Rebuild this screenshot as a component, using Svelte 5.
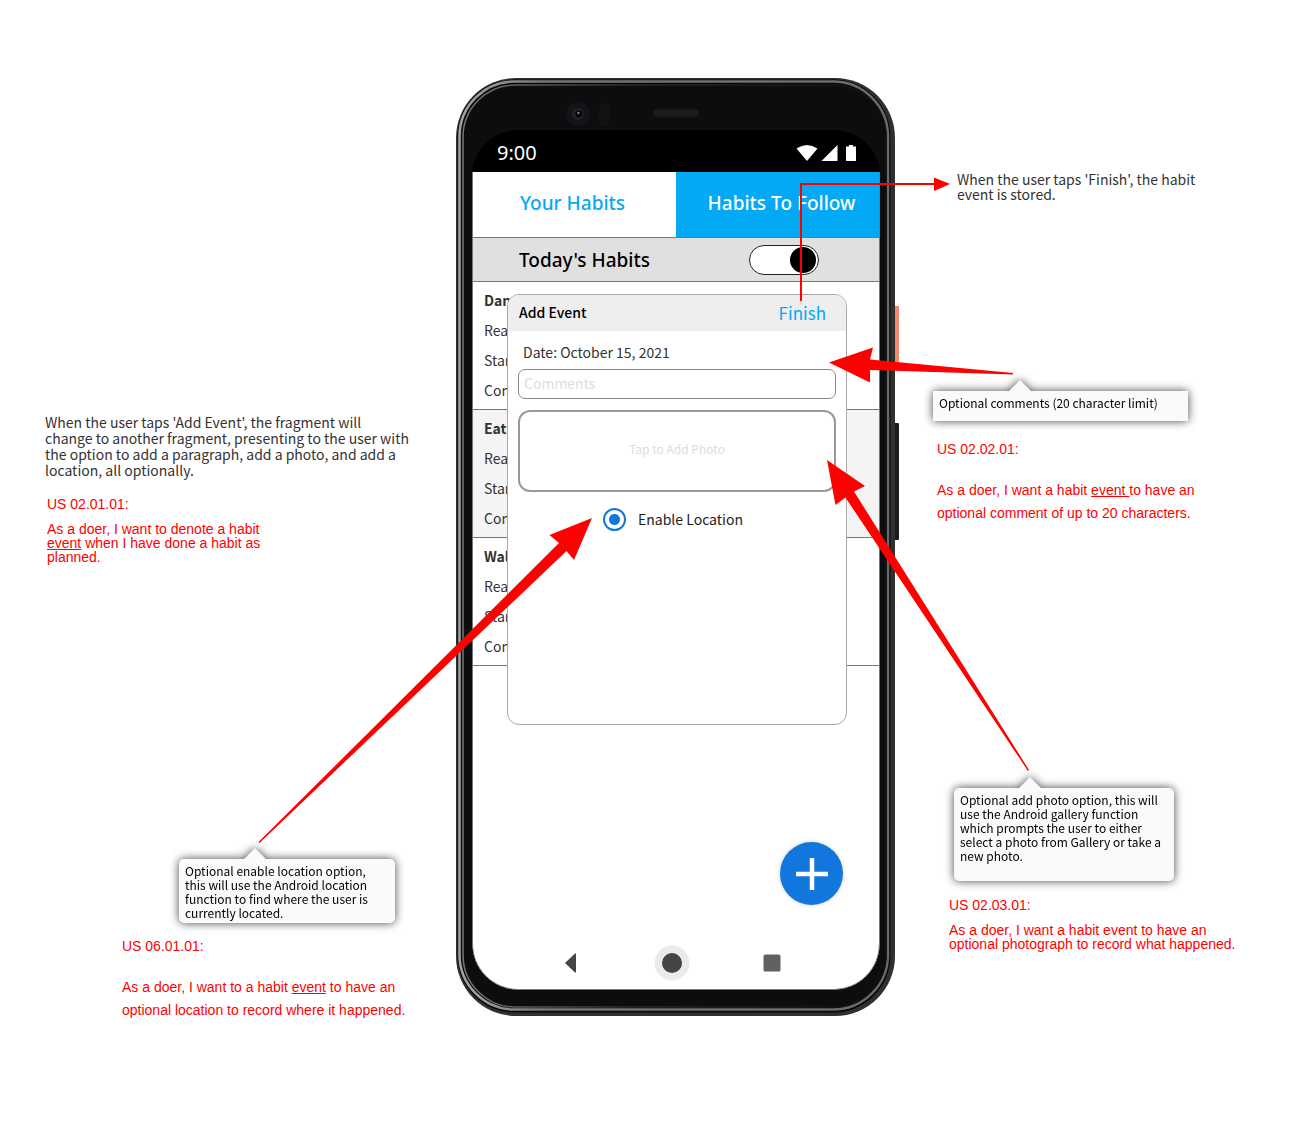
<script>
  const habits = [
    { name: 'Dance', shaded: false },
    { name: 'Eat', shaded: true },
    { name: 'Walk', shaded: false }
  ];
  let comments = $state('');
  let today = $state(true);
  let location = $state('on');
</script>

<main class="board">
  <section class="phone" aria-label="Phone">
    <svg class="shell" viewBox="0 0 444 940" aria-hidden="true">
      <defs>
        <linearGradient id="rim" x1="0" x2="1" y1="0" y2="0">
          <stop offset="0" stop-color="#a4a6a5" />
          <stop offset="0.2" stop-color="#777" />
          <stop offset="1" stop-color="#6a6a6a" />
        </linearGradient>
        <linearGradient id="inner" x1="0" x2="1" y1="0" y2="0">
          <stop offset="0" stop-color="#777" />
          <stop offset="0.4" stop-color="#2a2a2a" />
          <stop offset="1" stop-color="#111" />
        </linearGradient>
      </defs>
      <rect x="438" y="228" width="5" height="58" fill="#f5876e" />
      <rect x="438" y="345" width="5" height="117" rx="1" fill="#1c1c1c" />
      <rect x="0" y="0" width="439" height="938" rx="60" fill="#303031" />
      <rect x="1.500" y="1.500" width="433" height="933" rx="57" fill="#080808" />
      <rect x="3.500" y="3.500" width="428.500" height="928" rx="55" fill="#080808" stroke="url(#rim)" stroke-width="2.500" />
      <rect x="7" y="7" width="423" height="922" rx="52" fill="#0c0d0e" stroke="url(#inner)" stroke-width="1.500" />
      <circle cx="122" cy="36" r="12" fill="#131415" />
      <circle cx="122" cy="36" r="6" fill="#212327" />
      <circle cx="123" cy="36" r="3.500" fill="#08090d" />
      <circle cx="122.500" cy="35" r="1" fill="#a5abc0" />
      <rect x="143" y="25" width="11" height="23" rx="5" fill="#111213" />
      <rect x="197" y="31" width="46" height="8" rx="4" fill="#1b1b1b" stroke="#151515" />
    </svg>

    <div class="screen">
      <header class="status">
        <span>9:00</span>
        <svg width="62" height="18" viewBox="0 0 62 18" fill="#fff" aria-hidden="true">
          <path d="M0.500 4.500 Q11 -2.500 21.500 4.500 L11 17Z" />
          <path d="M25.500 17 H41.500 V1Z" />
          <path d="M50 2.500 H53 V1 H57 V2.500 H60 V17 H50Z" />
        </svg>
      </header>
      <div class="app">
        <nav class="tabs">
          <button class="tab">Your Habits</button>
          <button class="tab active">Habits To Follow</button>
        </nav>
        <div class="today">
          <label for="today">Today's Habits</label>
          <input id="today" class="switch" type="checkbox" role="switch" bind:checked={today} />
        </div>
        <ul class="habits">
          {#each habits as habit}
            <li class:shaded={habit.shaded}>
              <strong>{habit.name}</strong>
              <span>Reason</span>
              <span>Start</span>
              <span>Complete</span>
            </li>
          {/each}
        </ul>
        <button class="add" aria-label="Add habit">
          <svg width="34" height="34" viewBox="0 0 34 34" aria-hidden="true">
            <path d="M17 1V33M1 17H33" stroke="#fff" stroke-width="4.500" />
          </svg>
        </button>
        <nav class="system">
          <button aria-label="Back"><svg width="36" height="36" viewBox="0 0 36 36"><path d="M11 18 L21 8.500 H22 V27.500 H21Z" fill="#444" /></svg></button>
          <button aria-label="Home"><svg width="36" height="36" viewBox="0 0 36 36"><circle cx="18" cy="18" r="17.500" fill="#ebebeb" /><circle cx="18" cy="18" r="10" fill="#444" /></svg></button>
          <button aria-label="Recent"><svg width="36" height="36" viewBox="0 0 36 36"><rect x="9.500" y="9.500" width="17" height="17" rx="1.500" fill="#616161" /></svg></button>
        </nav>
      </div>
    </div>

    <form class="dialog" onsubmit={(e) => e.preventDefault()}>
      <header>
        <h2>Add Event</h2>
        <button class="finish">Finish</button>
      </header>
      <div class="fields">
        <p>Date: October 15, 2021</p>
        <input class="comments" aria-label="Comments" placeholder="Comments" maxlength="20" bind:value={comments} />
        <button class="photo" type="button">Tap to Add Photo</button>
        <label class="location">
          <input type="radio" name="location" value="on" bind:group={location} />
          Enable Location
        </label>
      </div>
    </form>
  </section>

  <svg class="arrows" width="1301" height="1136" viewBox="0 0 1301 1136" fill="#f00" aria-hidden="true">
    <path d="M801 301 V184 H936" fill="none" stroke="#f00" stroke-width="2" />
    <path d="M934 177.500 L950 184 L934 191Z" />
    <path d="M829 362.500 L873 347.500 L870 359.500 L1013 373 V374.500 L870 370 V382.500Z" />
    <path d="M827 460 L865 486 L854 491.500 L1029 770 L1028 771 L845.500 497.500 L835.500 505Z" />
    <path d="M592 518 L549.500 535 L559 543 L258.500 842 L259.500 843 L566.500 551 L574 560Z" />
  </svg>

  <p class="note finish-note">When the user taps 'Finish', the habit event is stored.</p>

  <section class="event-note">
    <p class="note">When the user taps 'Add Event', the fragment will change to another fragment, presenting to the user with the option to add a paragraph, add a photo, and add a location, all optionally.</p>
    <div class="story tight">
      <p>US 02.01.01:</p>
      <p>As a doer, I want to denote a habit <u>event</u> when I have done a habit as planned.</p>
    </div>
  </section>

  <section class="comment-note">
    <p class="callout square">Optional comments (20 character limit)</p>
    <div class="story">
      <p>US 02.02.01:</p>
      <p>As a doer, I want a habit <u>event{' '}</u>to have an optional comment of up to 20 characters.</p>
    </div>
  </section>

  <section class="photo-note">
    <p class="callout">Optional add photo option, this will use the Android gallery function which prompts the user to either select a photo from Gallery or take a new photo.</p>
    <div class="story tight">
      <p>US 02.03.01:</p>
      <p>As a doer, I want a habit event to have an optional photograph to record what happened.</p>
    </div>
  </section>

  <section class="location-note">
    <p class="callout">Optional enable location option, this will use the Android location function to find where the user is currently located.</p>
    <div class="story">
      <p>US 06.01.01:</p>
      <p>As a doer, I want to a habit <u>event</u> to have an optional location to record where it happened.</p>
    </div>
  </section>
</main>

<style>
  :global(body) { margin: 0; background: #fff; }
  .board {
    position: relative;
    min-height: 100vh;
    color: #333;
    font-family: "Noto Sans CJK SC", "Noto Sans", sans-serif;
    font-size: 14px;
  }
  .board :global(*) { box-sizing: border-box; }
  p, h2, ul { margin: 0; padding: 0; font-weight: 400; }
  button { border: 0; padding: 0; background: none; font: inherit; color: inherit; }

  .phone { position: absolute; left: 456px; top: 78px; width: 444px; padding: 52px 20px 28px 16px; }
  .shell { position: absolute; left: 0; top: 0; width: 444px; height: 940px; }
  .screen {
    position: relative;
    display: flex;
    flex-direction: column;
    min-height: 860px;
    border-radius: 46px;
    overflow: hidden;
    background: #000;
  }
  .app {
    flex: 1;
    display: flex;
    flex-direction: column;
    border: 1px solid #777;
    border-top: 0;
    border-radius: 0 0 46px 46px;
    background: #fff;
    overflow: hidden;
  }
  .status {
    display: flex;
    align-items: center;
    justify-content: space-between;
    height: 42px;
    padding: 4px 22px 0 25px;
    color: #fff;
    font-family: "Noto Sans", sans-serif;
    font-size: 20px;
    line-height: 38px;
  }
  .tabs { display: grid; grid-template-columns: 1fr 1fr; height: 66px; border-bottom: 1px solid #777; }
  .tab {
    padding: 0 4px 3px 0;
    color: #03a9f4;
    font-family: "Noto Sans", sans-serif;
    font-size: 19px;
    font-weight: 500;
  }
  .tab.active { background: #03a9f4; color: #fff; padding: 0 0 3px 8px; }
  .today {
    display: flex;
    align-items: center;
    justify-content: space-between;
    height: 44px;
    padding: 0 60px 0 46px;
    background: #e0e0e0;
    border-bottom: 1px solid #777;
    color: #000;
    font-family: "Noto Sans", sans-serif;
    font-size: 19px;
    font-weight: 500;
  }
  .switch {
    appearance: none;
    display: flex;
    justify-content: flex-start;
    align-items: center;
    width: 70px;
    height: 30px;
    margin: 0;
    padding: 2px;
    border: 1px solid #222;
    border-radius: 15px;
    background: #fff;
  }
  .switch::before { content: ""; width: 26px; height: 26px; border-radius: 50%; background: #000; }
  .switch:checked { justify-content: flex-end; }
  .habits { list-style: none; }
  .habits li {
    display: flex;
    flex-direction: column;
    height: 128px;
    padding: 3px 11px;
    border-bottom: 1px solid #777;
    line-height: 30px;
  }
  .habits .shaded { background: #f4f4f4; }
  .add {
    display: grid;
    place-items: center;
    width: 63px;
    height: 63px;
    margin: auto 36px 40px auto;
    border-radius: 50%;
    background: #1277dc;
    box-shadow: 0 0 4px #0003;
  }
  .system { display: flex; justify-content: center; gap: 64px; height: 44px; margin-right: 8px; }
  .system button { height: 36px; }

  .dialog {
    position: absolute;
    left: 51px;
    top: 216px;
    width: 340px;
    min-height: 431px;
    border: 1px solid #aaa;
    border-radius: 12px;
    overflow: hidden;
    background: #fff;
  }
  .dialog header {
    display: flex;
    align-items: center;
    justify-content: space-between;
    height: 36px;
    padding: 0 20px 2px 11px;
    background: #eee;
  }
  h2 { color: #000; font-size: 14px; font-weight: 500; }
  .finish { color: #03a9f4; font-size: 17px; }
  .fields { display: flex; flex-direction: column; padding: 10px; }
  .fields p { padding: 0 5px; line-height: 22px; }
  .comments {
    height: 30px;
    margin-top: 6px;
    padding: 0 5px 2px;
    border: 1px solid #888;
    border-radius: 7px;
    font: inherit;
  }
  .comments::placeholder { color: #ddd; opacity: 1; }
  .photo {
    height: 82px;
    margin-top: 11px;
    padding-bottom: 5px;
    border: 2px solid #999;
    border-radius: 12px;
    color: #ddd;
    font-size: 12px;
  }
  .location {
    display: flex;
    align-items: center;
    justify-content: center;
    gap: 12px;
    margin-top: 15px;
    padding-right: 8px;
    color: #222;
    line-height: 24px;
  }
  .location input {
    appearance: none;
    width: 23px;
    height: 23px;
    margin: 0;
    border: 2px solid #1277dc;
    border-radius: 50%;
  }
  .location input:checked { background: radial-gradient(#1277dc 5px, #fff 6px); }

  .arrows { position: absolute; left: 0; top: 0; pointer-events: none; z-index: 2; }
  .note { line-height: 16px; }
  .finish-note { position: absolute; left: 957px; top: 172px; width: 260px; line-height: 15px; }
  .event-note { position: absolute; left: 45px; top: 414px; width: 364px; }
  .comment-note { position: absolute; left: 933px; top: 391px; width: 290px; }
  .photo-note { position: absolute; left: 954px; top: 788px; width: 300px; }
  .location-note { position: absolute; left: 179px; top: 859px; width: 216px; }

  .story { color: #f00; font-family: "Liberation Sans", Arial, sans-serif; font-size: 14px; line-height: 23px; }
  .story p + p { margin-top: 18px; }
  .tight { line-height: 14px; }
  .tight p + p { margin-top: 11px; }
  .event-note .story { width: 230px; margin: 19px 0 0 2px; }
  .comment-note .story { width: 280px; margin: 17px 0 0 4px; }
  .photo-note .story { width: 305px; margin: 17px 0 0 -5px; }
  .location-note .story { width: 300px; margin: 12px 0 0 -57px; }

  .callout {
    position: relative;
    width: 220px;
    min-height: 64px;
    padding: 5px 6px 3px;
    border-radius: 5px;
    background: #fafafa;
    filter: drop-shadow(0 0 5px #000b);
    color: #000;
    font-size: 12px;
    line-height: 14px;
  }
  .callout::before {
    content: "";
    position: absolute;
    left: 65px;
    top: -11px;
    width: 22px;
    height: 11px;
    background: #fafafa;
    clip-path: polygon(50% 0, 100% 100%, 0 100%);
  }
  .photo-note .callout { min-height: 93px; }
  .location-note .callout { width: 216px; padding-right: 14px; }
  .callout.square { width: 255px; min-height: 30px; border-radius: 0; }
  .square::before { left: 76px; }
</style>
